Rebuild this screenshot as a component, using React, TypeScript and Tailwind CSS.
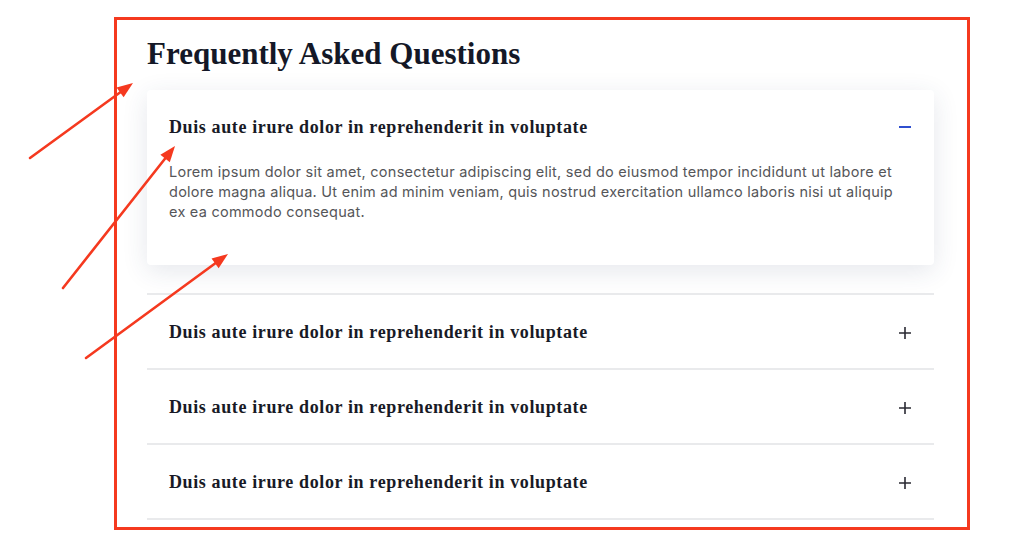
const QUESTION = "Duis aute irure dolor in reprehenderit in voluptate";

const ANSWER_LINES = [
  "Lorem ipsum dolor sit amet, consectetur adipiscing elit, sed do eiusmod tempor incididunt ut labore et",
  "dolore magna aliqua. Ut enim ad minim veniam, quis nostrud exercitation ullamco laboris nisi ut aliquip",
  "ex ea commodo consequat.",
];

const serif = "font-['Liberation_Serif',serif]";

function PlusIcon() {
  return (
    <svg width="14" height="14" viewBox="0 0 14 14" className="text-[#2a2a33]">
      <path d="M7 1v12M1 7h12" stroke="currentColor" strokeWidth="1.6" />
    </svg>
  );
}

function MinusIcon() {
  return (
    <svg width="14" height="14" viewBox="0 0 14 14" className="text-[#2f4fcf]">
      <path d="M1 7h12" stroke="currentColor" strokeWidth="2" />
    </svg>
  );
}

function Arrow({ x1, y1, x2, y2 }: { x1: number; y1: number; x2: number; y2: number }) {
  const dx = x2 - x1;
  const dy = y2 - y1;
  const len = Math.hypot(dx, dy);
  const ux = dx / len;
  const uy = dy / len;
  const head = 16;
  const half = 6;
  const bx = x2 - ux * head;
  const by = y2 - uy * head;
  const pts = `${x2},${y2} ${bx - uy * half},${by + ux * half} ${bx + uy * half},${by - ux * half}`;
  return (
    <g>
      <line x1={x1} y1={y1} x2={bx + ux * 2} y2={by + uy * 2} stroke="#f5391f" strokeWidth="2.6" strokeLinecap="round" />
      <polygon points={pts} fill="#f5391f" />
    </g>
  );
}

function CollapsedRow() {
  return (
    <div className="flex h-[75px] items-center justify-between border-t-2 border-[#e9eaec] px-[22px] pt-[2px]">
      <h3 className={`${serif} text-[18px] font-bold tracking-[0.62px] text-[#181a26]`}>{QUESTION}</h3>
      <PlusIcon />
    </div>
  );
}

export default function App() {
  return (
    <div className="relative h-[551px] w-[1024px] overflow-hidden bg-white">
      <div className="ml-[114px] mt-[17px] h-[513px] w-[856px] border-[3px] border-[#f5391f] pl-[30px]">
        <div className="w-[787px]">
          <h2 className={`${serif} mt-[14px] h-[40px] text-[31px] font-bold leading-[40px] text-[#141827]`}>
            Frequently Asked Questions
          </h2>
          <div className="mt-[16px] h-[175px] rounded-[4px] bg-white px-[22px] pt-[26px] shadow-[0_6px_26px_rgba(40,60,100,0.12)]">
            <div className="flex items-center justify-between">
              <h3 className={`${serif} text-[18px] font-bold leading-[22px] tracking-[0.62px] text-[#181a26]`}>
                {QUESTION}
              </h3>
              <MinusIcon />
            </div>
            <p className="mt-[24px] font-['Inter',sans-serif] text-[14.5px] leading-[20px] tracking-[0.25px] text-[#555659]">
              {ANSWER_LINES.map((line) => (
                <span key={line} className="block whitespace-nowrap">
                  {line}
                </span>
              ))}
            </p>
          </div>
          <div className="mt-[28px]">
            <CollapsedRow />
            <CollapsedRow />
            <CollapsedRow />
            <div className="border-t-2 border-[#e9eaec]" />
          </div>
        </div>
      </div>
      <svg className="pointer-events-none absolute left-0 top-0" width="1024" height="551">
        <Arrow x1={30} y1={158} x2={133} y2={83} />
        <Arrow x1={63} y1={288} x2={175} y2={146} />
        <Arrow x1={86} y1={358} x2={228} y2={254} />
      </svg>
    </div>
  );
}
